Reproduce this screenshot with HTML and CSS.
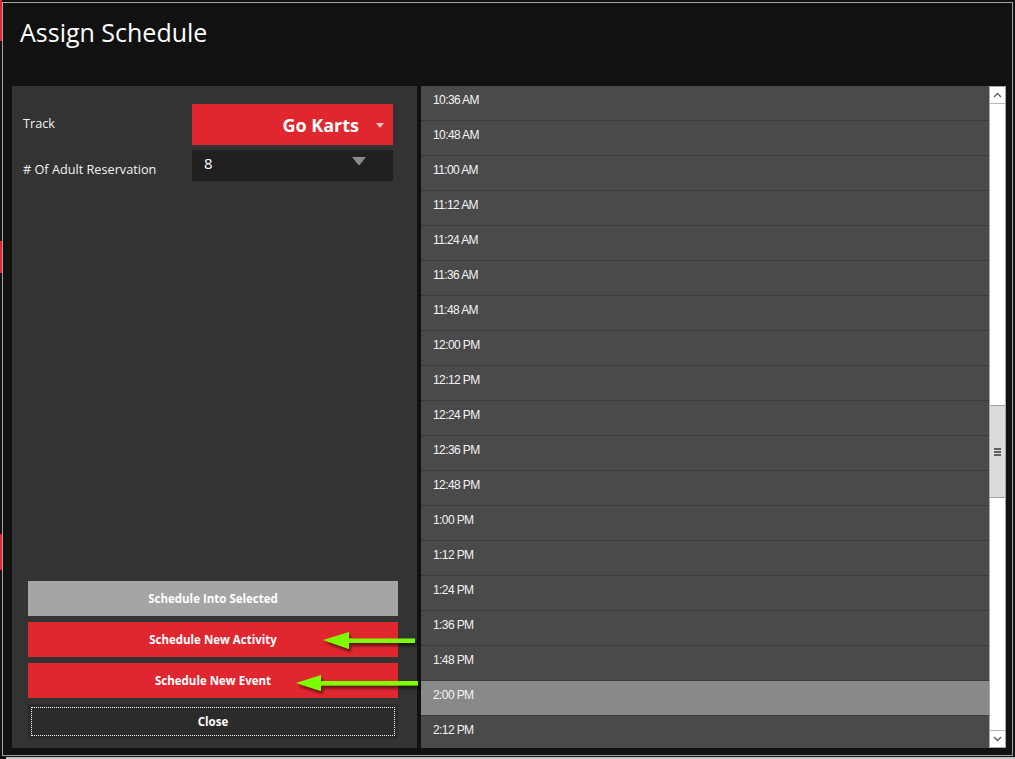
FILE: index.html
```html
<!DOCTYPE html>
<html lang="en">
<head>
    <meta charset="UTF-8">
    <meta name="viewport" content="width=device-width, initial-scale=1.0">
    <title>Assign Schedule</title>
    <link rel="stylesheet" href="styles.css">
</head>
<body>
    <!-- bits of the window behind the dialog -->
    <div class="edge edge-a"></div>
    <div class="edge edge-b"></div>
    <div class="edge edge-c"></div>
    <div class="edge-bottom"></div>

    <div class="window">
        <h1 class="title">Assign Schedule</h1>

        <div class="content">
            <div class="panel">
                <div class="form">
                    <label class="label label-top">Track</label>
                    <div class="select">
                        <span>Go Karts</span>
                        <span class="caret"></span>
                    </div>

                    <label class="label label-low"># Of Adult Reservation</label>
                    <div class="number">
                        <span>8</span>
                        <svg class="spin" width="16" height="10" viewBox="0 0 16 10">
                            <path d="M1 1 H15 L9 8.5 Q8 9.5 7 8.5 Z" fill="#8a8a8a"/>
                        </svg>
                    </div>
                </div>

                <div class="actions">
                    <button class="btn btn-grey">Schedule Into Selected</button>
                    <button class="btn btn-red">Schedule New Activity</button>
                    <button class="btn btn-red">Schedule New Event</button>
                    <button class="btn btn-close">Close</button>
                </div>
            </div>

            <div class="list">
                <div class="rows">
                    <div class="row">10:36 AM</div>
                    <div class="row">10:48 AM</div>
                    <div class="row">11:00 AM</div>
                    <div class="row">11:12 AM</div>
                    <div class="row">11:24 AM</div>
                    <div class="row">11:36 AM</div>
                    <div class="row">11:48 AM</div>
                    <div class="row">12:00 PM</div>
                    <div class="row">12:12 PM</div>
                    <div class="row">12:24 PM</div>
                    <div class="row">12:36 PM</div>
                    <div class="row">12:48 PM</div>
                    <div class="row">1:00 PM</div>
                    <div class="row">1:12 PM</div>
                    <div class="row">1:24 PM</div>
                    <div class="row">1:36 PM</div>
                    <div class="row">1:48 PM</div>
                    <div class="row selected">2:00 PM</div>
                    <div class="row">2:12 PM</div>
                </div>

                <div class="scrollbar">
                    <div class="sb-btn">
                        <svg width="9" height="6" viewBox="0 0 9 6"><path d="M1 5 L4.5 1.5 L8 5" fill="none" stroke="#606060" stroke-width="1.4"/></svg>
                    </div>
                    <div class="sb-track">
                        <div class="sb-thumb">
                            <span></span><span></span><span></span>
                        </div>
                    </div>
                    <div class="sb-btn">
                        <svg width="9" height="6" viewBox="0 0 9 6"><path d="M1 1 L4.5 4.5 L8 1" fill="none" stroke="#606060" stroke-width="1.4"/></svg>
                    </div>
                </div>
            </div>
        </div>
    </div>

    <!-- green callout arrows drawn over the screenshot -->
    <svg class="arrows" width="1015" height="759" viewBox="0 0 1015 759">
        <defs>
            <filter id="shade" x="-20%" y="-50%" width="140%" height="200%">
                <feDropShadow dx="2" dy="3" stdDeviation="1.5" flood-color="#000" flood-opacity="0.55"/>
            </filter>
        </defs>
        <g fill="#7dff06" filter="url(#shade)">
            <polygon points="323,640 349,632 349,638.5 415,638.5 415,643 349,643 349,649"/>
            <polygon points="296,683 321,675 321,681 418,681 418,685.5 321,685.5 321,691"/>
        </g>
    </svg>
</body>
</html>
```

FILE: styles.css
```css
body {
    margin: 0;
    background: #111111;
    font-family: 'Open Sans', 'Noto Sans', sans-serif;
    color: #ffffff;
    width: 1015px;
    height: 759px;
    overflow: hidden;
    position: relative;
}

.edge {
    position: absolute;
    left: 0;
    width: 2px;
    background: #e0272f;
}
.edge-a { top: 0; height: 41px; }
.edge-b { top: 241px; height: 32px; }
.edge-c { top: 534px; height: 36px; }
.edge-bottom {
    position: absolute;
    left: 6px;
    right: 0;
    top: 757px;
    height: 2px;
    background: #c4c4c4;
}

.window {
    margin: 2px 0 0 2px;
    width: 1011px;
    height: 754px;
    box-sizing: border-box;
    border: 1px solid #a3a3a3;
    background: #111111;
}

.title {
    margin: 0;
    height: 83px;
    box-sizing: border-box;
    padding: 12px 0 0 17px;
    font-size: 25px;
    font-weight: 400;
    line-height: 34px;
    color: #ffffff;
}

.content {
    display: flex;
    gap: 4px;
    height: 662px;
    padding-left: 9px;
}

/* left side */
.panel {
    width: 405px;
    background: #333333;
    display: flex;
    flex-direction: column;
    padding: 18px 0 9px 0;
    box-sizing: border-box;
}

.form {
    display: grid;
    grid-template-columns: 169px 201px;
    grid-template-rows: 41px 31px;
    row-gap: 5px;
    padding-left: 11px;
    align-items: center;
}

.label {
    font-size: 12.7px;
    color: #f2f2f2;
    line-height: 18px;
}
.label-top {
    padding-bottom: 3px;
}
.label-low {
    padding-top: 6px;
}

.select {
    height: 41px;
    background: #e0272f;
    display: flex;
    align-items: center;
    justify-content: flex-end;
    font-size: 18px;
    font-weight: 700;
    padding-right: 9px;
    gap: 17px;
}
.caret {
    width: 0;
    height: 0;
    border-left: 4px solid transparent;
    border-right: 4px solid transparent;
    border-top: 5px solid #f4c4c6;
    margin-top: 1px;
}

.number {
    height: 31px;
    background: #202020;
    display: flex;
    justify-content: space-between;
    padding: 0 26px 0 12px;
    font-size: 15px;
    line-height: 27px;
}
.spin {
    margin-top: 6px;
}

.actions {
    margin-top: auto;
    display: flex;
    flex-direction: column;
    gap: 6px;
    padding-left: 16px;
}

.btn {
    width: 370px;
    height: 35px;
    border: none;
    padding: 0;
    font-family: 'Open Sans', 'Noto Sans', sans-serif;
    font-size: 11.5px;
    font-weight: 700;
    color: #ffffff;
    cursor: pointer;
}
.btn-grey { background: #a5a5a5; }
.btn-red { background: #e0272f; }
.btn-close {
    background: #2b2b2b;
    outline: 1px dotted #ffffff;
    outline-offset: -4px;
}

/* right side */
.list {
    display: flex;
}

.rows {
    width: 568px;
    height: 662px;
    overflow: hidden;
    background: #4a4a4a;
}

.row {
    height: 35px;
    box-sizing: border-box;
    border-bottom: 1px solid #3b3b3b;
    padding: 7px 0 0 12px;
    font-family: 'Liberation Sans', Arial, sans-serif;
    font-size: 12px;
    letter-spacing: -0.6px;
    line-height: 14px;
    color: #f4f4f4;
}
.row.selected {
    background: #898989;
}

.scrollbar {
    width: 17px;
    height: 662px;
    box-sizing: border-box;
    border: 1px solid #a8a8a8;
    background: #ffffff;
    display: flex;
    flex-direction: column;
}
.sb-btn {
    height: 16px;
    display: flex;
    align-items: center;
    justify-content: center;
    background: #ffffff;
}
.sb-btn:first-child { border-bottom: 1px solid #b8b8b8; }
.sb-btn:last-child { border-top: 1px solid #b8b8b8; }

.sb-track {
    flex: 1;
}
.sb-thumb {
    margin-top: 301px;
    height: 93px;
    box-sizing: border-box;
    background: #dcdcdc;
    border-top: 1px solid #a0a0a0;
    border-bottom: 1px solid #a0a0a0;
    display: flex;
    flex-direction: column;
    align-items: center;
    justify-content: center;
    gap: 1px;
}
.sb-thumb span {
    width: 7px;
    height: 2px;
    background: #606060;
}

.arrows {
    position: absolute;
    top: 0;
    left: 0;
    pointer-events: none;
}
```
